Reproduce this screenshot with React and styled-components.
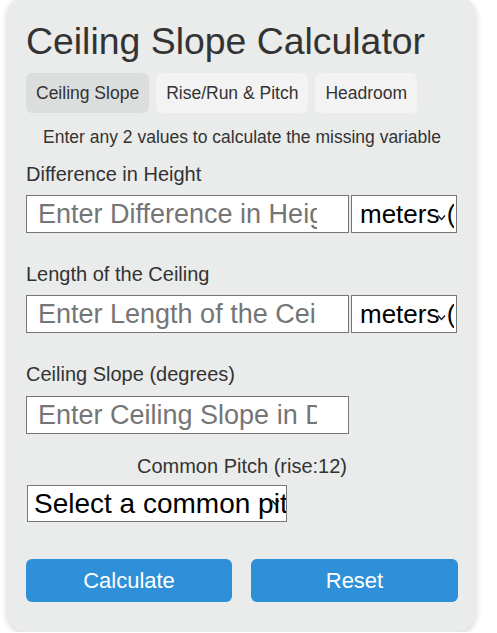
import React from "react";
import styled, { createGlobalStyle } from "styled-components";

const Global = createGlobalStyle`
  html, body { margin: 0; padding: 0; background: #ffffff; }
  body { font-family: "Liberation Sans", Arial, sans-serif; color: #333333; }
  * { box-sizing: border-box; }
`;

const Page = styled.div`
  padding: 0 21px 0 7px;
`;

const Card = styled.div`
  width: 469px;
  margin-top: -4px;
  background: #eaebeb;
  border-radius: 20px;
  box-shadow: 0 2px 6px rgba(0, 0, 0, 0.18);
  padding: 24px 18px 30px 19px;
  display: flex;
  flex-direction: column;
`;

const Title = styled.h1`
  margin: 0;
  font-size: 37.4px;
  font-weight: 400;
  line-height: 43px;
  color: #333333;
`;

const Tabs = styled.div`
  display: flex;
  gap: 7px;
  margin-top: 10px;
`;

const Tab = styled.button`
  font-family: inherit;
  font-size: 17.5px;
  line-height: 20px;
  color: #333333;
  border: none;
  border-radius: 6px;
  padding: 10px 10px;
  background: ${(p) => (p.$active ? "#dcdddd" : "#f3f3f3")};
  cursor: pointer;
`;

const Hint = styled.p`
  margin: 14px 0 0;
  font-size: 17.5px;
  line-height: 20px;
  text-align: center;
`;

const Group = styled.div`
  display: flex;
  flex-direction: column;
  margin-top: ${(p) => p.$top}px;
`;

const Label = styled.label`
  display: block;
  font-size: 20px;
  line-height: 23px;
  color: #333333;
  text-align: ${(p) => (p.$center ? "center" : "left")};
  margin-bottom: ${(p) => p.$gap}px;
`;

const Row = styled.div`
  display: flex;
  gap: 2px;
`;

const Input = styled.input`
  width: 323px;
  height: 38px;
  border: 1px solid #767676;
  border-radius: 0;
  background: #ffffff;
  font-family: inherit;
  font-size: 27px;
  padding: 0 31px 0 11px;
  color: #000;
  outline: none;
  &::placeholder { color: #757575; }
`;

const SelectWrap = styled.div`
  position: relative;
  display: flex;
  margin-left: ${(p) => p.$shift || 0}px;
`;

const Select = styled.select`
  appearance: none;
  -webkit-appearance: none;
  width: ${(p) => p.$w}px;
  height: ${(p) => p.$h}px;
  border: 1px solid #767676;
  border-radius: 0;
  background: #ffffff;
  font-family: inherit;
  font-size: ${(p) => p.$fs}px;
  color: #000;
  padding: 0 ${(p) => p.$pr || 0}px 0 ${(p) => p.$pl}px;
  outline: none;
  overflow: hidden;
  white-space: nowrap;
`;

const Chevron = styled.svg`
  position: absolute;
  z-index: 1;
  top: ${(p) => p.$top}px;
  right: ${(p) => p.$right}px;
  width: 9px;
  height: 7px;
  pointer-events: none;
`;

const Arrow = ({ top, right }) => (
  <Chevron $top={top} $right={right} viewBox="0 0 9 7">
    <polyline points="1,1.5 4.5,5.5 8,1.5" fill="none" stroke="#1a1a1a" strokeWidth="1.4" />
  </Chevron>
);

const Buttons = styled.div`
  display: flex;
  justify-content: space-between;
  margin-top: 37px;
`;

const Button = styled.button`
  width: ${(p) => p.$w}px;
  height: 43px;
  border: none;
  border-radius: 6px;
  background: #2e90d8;
  color: #ffffff;
  font-family: inherit;
  font-size: 22px;
  cursor: pointer;
`;

function UnitPicker() {
  return (
    <SelectWrap>
      <Select $w={106} $h={38} $fs={26} $pl={8} $pr={2} defaultValue="m">
        <option value="m">meters (m)</option>
        <option value="ft">feet (ft)</option>
      </Select>
      <Arrow top={19} right={11} />
    </SelectWrap>
  );
}

export default function App() {
  return (
    <Page>
      <Global />
      <Card>
        <Title>Ceiling Slope Calculator</Title>
        <Tabs>
          <Tab $active>Ceiling Slope</Tab>
          <Tab>Rise/Run &amp; Pitch</Tab>
          <Tab>Headroom</Tab>
        </Tabs>
        <Hint>Enter any 2 values to calculate the missing variable</Hint>

        <Group $top={16}>
          <Label $gap={9}>Difference in Height</Label>
          <Row>
            <Input placeholder="Enter Difference in Height" />
            <UnitPicker />
          </Row>
        </Group>

        <Group $top={30}>
          <Label $gap={9}>Length of the Ceiling</Label>
          <Row>
            <Input placeholder="Enter Length of the Ceiling" />
            <UnitPicker />
          </Row>
        </Group>

        <Group $top={30}>
          <Label $gap={10}>Ceiling Slope (degrees)</Label>
          <Row>
            <Input placeholder="Enter Ceiling Slope in Degrees" />
          </Row>
        </Group>

        <Group $top={21}>
          <Label $center $gap={7}>Common Pitch (rise:12)</Label>
          <Row>
            <SelectWrap $shift={1}>
              <Select $w={260} $h={37} $fs={28} $pl={6} defaultValue="">
                <option value="">Select a common pitch</option>
                <option value="4">4:12</option>
                <option value="6">6:12</option>
                <option value="8">8:12</option>
                <option value="12">12:12</option>
              </Select>
              <Arrow top={14} right={7} />
            </SelectWrap>
          </Row>
        </Group>

        <Buttons>
          <Button $w={206}>Calculate</Button>
          <Button $w={207}>Reset</Button>
        </Buttons>
      </Card>
    </Page>
  );
}
